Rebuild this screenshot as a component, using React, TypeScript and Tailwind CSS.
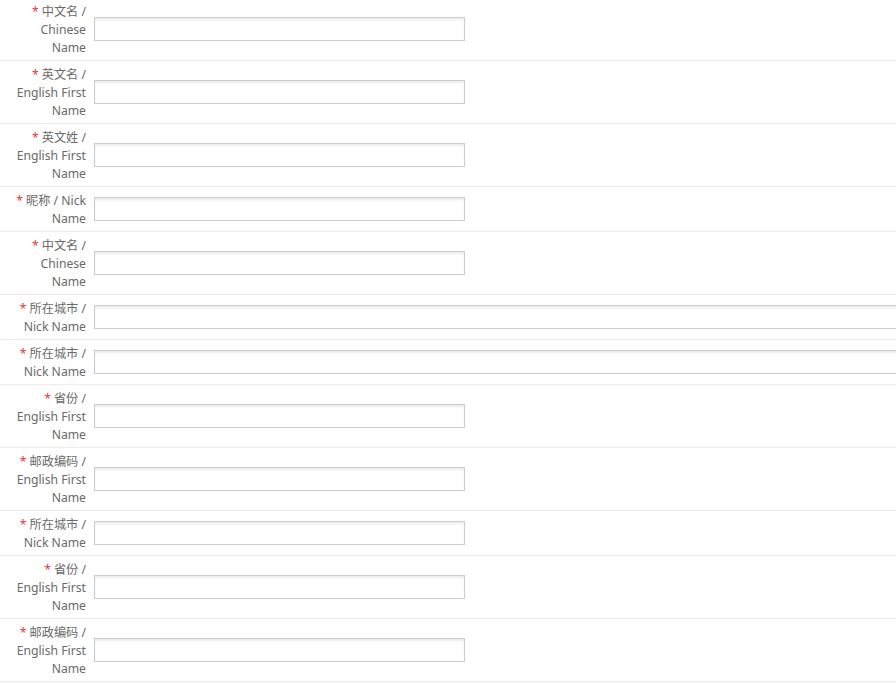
import React from "react";

type Row = { lines: string[]; wide?: boolean };

const rows: Row[] = [
  { lines: ["中文名 /", "Chinese", "Name"] },
  { lines: ["英文名 /", "English First", "Name"] },
  { lines: ["英文姓 /", "English First", "Name"] },
  { lines: ["昵称 / Nick", "Name"] },
  { lines: ["中文名 /", "Chinese", "Name"] },
  { lines: ["所在城市 /", "Nick Name"], wide: true },
  { lines: ["所在城市 /", "Nick Name"], wide: true },
  { lines: ["省份 /", "English First", "Name"] },
  { lines: ["邮政编码 /", "English First", "Name"] },
  { lines: ["所在城市 /", "Nick Name"] },
  { lines: ["省份 /", "English First", "Name"] },
  { lines: ["邮政编码 /", "English First", "Name"] },
];

export default function App() {
  return (
    <div
      className="w-[896px] h-[684px] overflow-hidden bg-white"
      style={{ fontFamily: '"Noto Sans", "Noto Sans CJK SC", sans-serif' }}
    >
      <div className="-mt-[2px]">
        {rows.map((r, i) => (
          <div
            key={i}
            className="flex items-center border-b border-[#ebebeb] pt-[4px] pb-[4px]"
          >
            <div className="w-[86px] shrink-0 translate-y-[1px] text-right text-[12.2px] leading-[18px] text-[#6a6a6a]">
              {r.lines.map((l, j) => (
                <div key={j} className="whitespace-nowrap">
                  {j === 0 && <span className="text-[#e4393c] mr-[3px]">*</span>}
                  {l}
                </div>
              ))}
            </div>
            <div className="ml-[8px]">
              <input
                type="text"
                className={`${r.wide ? "w-[830px]" : "w-[371px]"} h-[24px] block border border-[#cccccc] bg-white shadow-[inset_0_2px_2px_rgba(0,0,0,0.08)] outline-none`}
              />
            </div>
          </div>
        ))}
      </div>
    </div>
  );
}
